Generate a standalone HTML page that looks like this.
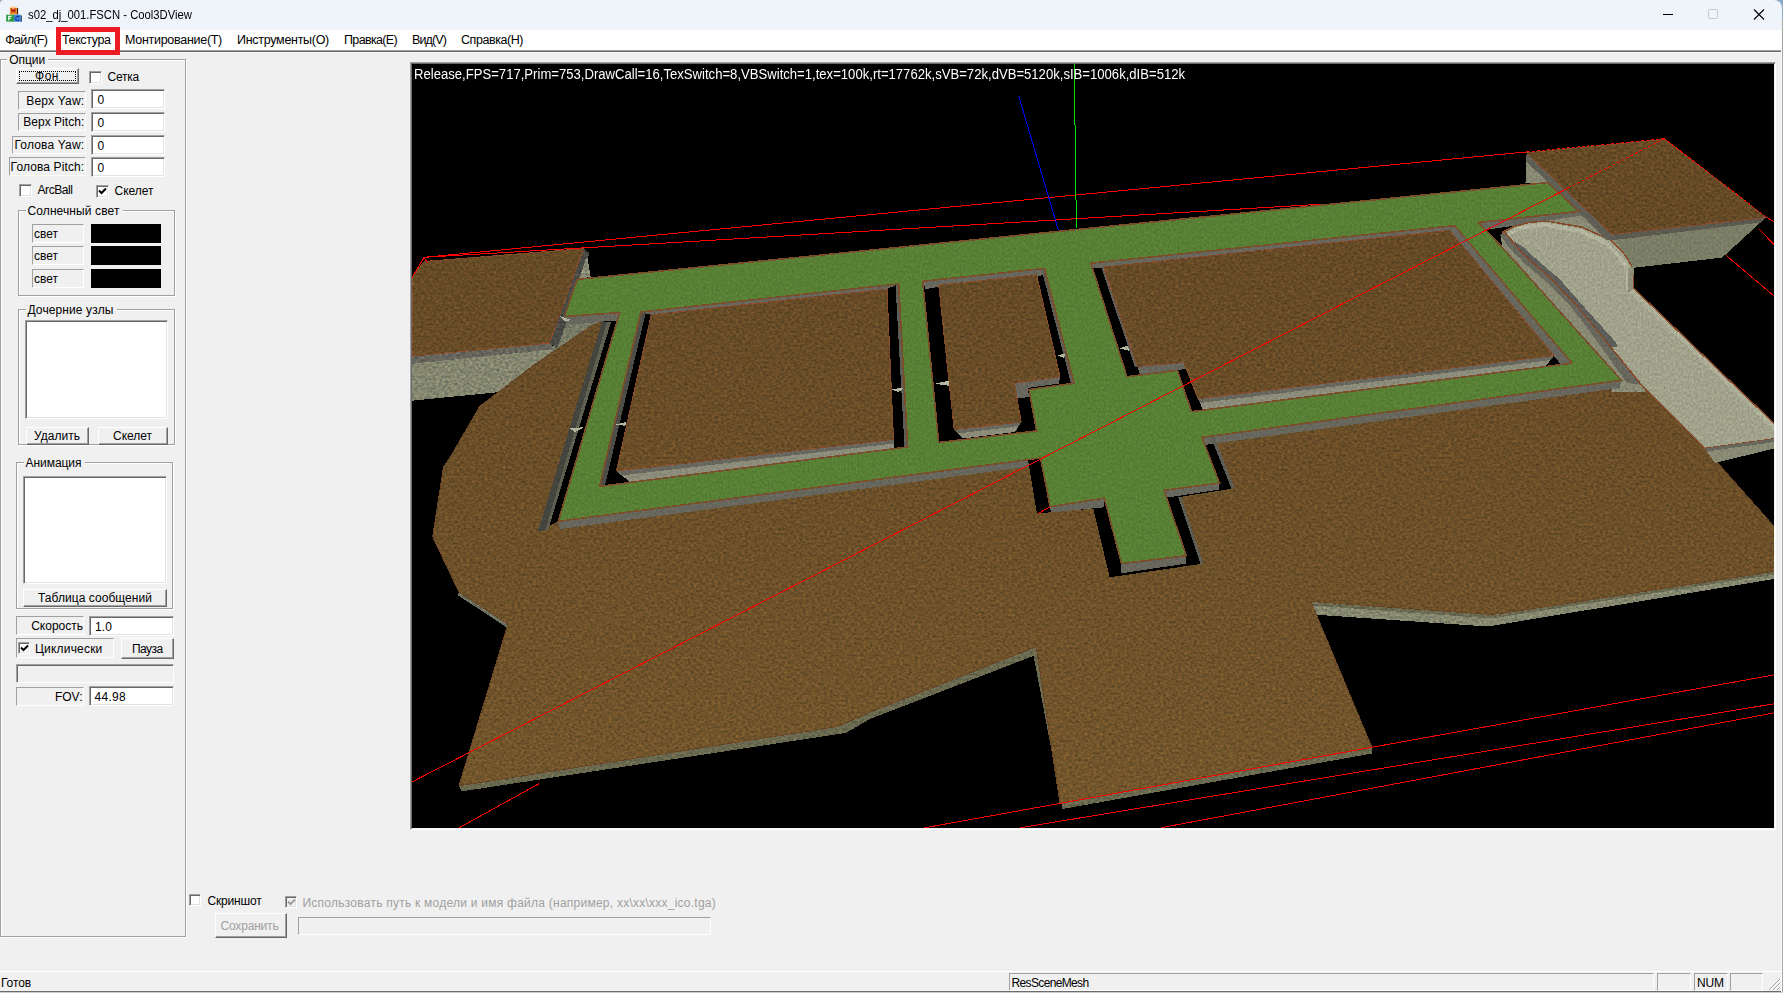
<!DOCTYPE html>
<html><head><meta charset="utf-8"><title>Cool3DView</title>
<style>

*{margin:0;padding:0;box-sizing:border-box}
html,body{width:1783px;height:993px;overflow:hidden;background:#f0f0f0}
body{position:relative;font-family:"Liberation Sans",sans-serif;font-size:11px;color:#000}
.a{position:absolute}
.t{position:absolute;white-space:nowrap;line-height:16px;height:16px}
.btn{position:absolute;background:#f0f0f0;border:1px solid;border-color:#fff #696969 #696969 #fff;box-shadow:inset -1px -1px 0 #a0a0a0, inset 1px 1px 0 #f0f0f0}
.edit{position:absolute;background:#fff;border:1px solid;border-color:#a0a0a0 #fff #fff #a0a0a0;box-shadow:inset 1px 1px 0 #696969, inset -1px -1px 0 #e3e3e3}
.sunk{position:absolute;border:1px solid;border-color:#a0a0a0 #fff #fff #a0a0a0}
.grp{position:absolute;border:1px solid #a0a0a0;box-shadow:1px 1px 0 #fff, inset 1px 1px 0 #fff}
.glab{position:absolute;background:#f0f0f0;height:12px}
.cb{position:absolute;width:13px;height:13px;background:#fff;border:1px solid;border-color:#a0a0a0 #fff #fff #a0a0a0;box-shadow:inset 1px 1px 0 #696969, inset -1px -1px 0 #e3e3e3}
.blk{position:absolute;background:#000}
.pane{position:absolute;border:1px solid;border-color:#a0a0a0 #fff #fff #a0a0a0;height:18px;top:973px}

</style></head>
<body>
<div class="a" style="left:1770px;top:0;width:13px;height:20px;background:#8aaac8"></div>
<div class="a" style="left:0;top:0;width:5px;height:5px;background:#93a7bd"></div>
<div class="a" style="left:0;top:0;width:1782px;height:30px;background:#eff3fa;border-top-right-radius:8px;border-top-left-radius:4px"></div>
<div class="a" style="left:0;top:30px;width:1783px;height:20px;background:#fff"></div>
<div class="a" style="left:0;top:50px;width:1781px;height:1px;background:#a0a0a0"></div>
<div class="a" style="left:0;top:51px;width:1781px;height:1px;background:#696969"></div>
<div class="a" style="left:0;top:52px;width:1781px;height:1px;background:#f8f8f8"></div>
<div class="a" style="left:1781px;top:30px;width:1px;height:963px;background:#fcfcfc"></div>
<div class="a" style="left:1782px;top:19px;width:1px;height:974px;background:#a8a8a8"></div>
<svg class="a" style="left:5px;top:5px" width="18" height="18" viewBox="5 5 18 18">
<rect x="16.5" y="8" width="1.6" height="6.5" fill="#3a2412"/>
<rect x="20.6" y="15.5" width="1.2" height="6.4" fill="#2a2a3a"/>
<rect x="9.9" y="7.2" width="7" height="7.4" rx="0.8" fill="#f08a22"/>
<ellipse cx="13.4" cy="7.3" rx="3.4" ry="1.1" fill="#fbd3a4"/>
<rect x="6.2" y="14.7" width="7.8" height="7.2" fill="#2f9a48"/>
<rect x="14" y="14.7" width="7" height="7.2" fill="#3b86d8"/>
<path d="M11.9 12.6V9.3l1.5 1.8 1.5-1.8v3.3" stroke="#a01818" stroke-width="1.1" fill="none"/>
<path d="M8.6 20.6v-4.3h3M8.6 18.4h2.4" stroke="#e8f6e0" stroke-width="1.2" fill="none"/>
<path d="M19.3 17.2a2 2.2 0 1 0 0 2.6" stroke="#1c3fae" stroke-width="1.2" fill="none"/>
<rect x="6.2" y="21" width="15.4" height="0.9" fill="#ffffff" opacity="0.25"/>
</svg>
<svg class="a" style="left:1650px;top:0" width="130" height="30" viewBox="0 0 130 30">
<path d="M13 14.5h10" stroke="#000" stroke-width="1"/>
<rect x="58.5" y="9.5" width="9" height="9" rx="1" fill="none" stroke="#c4c8ce" stroke-width="1"/>
<path d="M104 9.5l10 10M114 9.5l-10 10" stroke="#000" stroke-width="1.1"/>
</svg>
<div class="a" style="left:56px;top:27px;width:64px;height:28px;border:5px solid #ed1c24"></div>
<div class="grp" style="left:0px;top:59px;width:186px;height:878px"></div>
<div class="glab" style="left:7.199999999999999px;top:53px;width:41px"></div>
<div class="btn" style="left:16px;top:68px;width:63px;height:16px"></div>
<div class="a" style="left:19px;top:71px;width:57px;height:10px;border:1px dotted #000"></div>
<div class="cb" style="left:89px;top:71px"></div>
<div class="sunk" style="left:18px;top:91px;width:68px;height:19px"></div>
<div class="edit" style="left:91px;top:89px;width:74px;height:20px"></div>
<div class="sunk" style="left:18px;top:113px;width:68px;height:18px"></div>
<div class="edit" style="left:91px;top:112px;width:74px;height:20px"></div>
<div class="sunk" style="left:12px;top:136px;width:74px;height:18px"></div>
<div class="edit" style="left:91px;top:135px;width:74px;height:20px"></div>
<div class="sunk" style="left:9px;top:157px;width:77px;height:19px"></div>
<div class="edit" style="left:91px;top:157px;width:74px;height:20px"></div>
<div class="cb" style="left:19px;top:184px"></div>
<div class="cb" style="left:96px;top:185px"></div>
<svg class="a" style="left:98px;top:187px" width="9" height="9" viewBox="0 0 9 9"><path d="M1 3.5L3.5 6L8 1.5" stroke="#000" stroke-width="2" fill="none"/></svg>
<div class="grp" style="left:18px;top:210px;width:157px;height:86px"></div>
<div class="glab" style="left:25.5px;top:204px;width:97px"></div>
<div class="sunk" style="left:32px;top:224px;width:52px;height:19px"></div>
<div class="blk" style="left:91px;top:224px;width:70px;height:19px"></div>
<div class="sunk" style="left:32px;top:246px;width:52px;height:19px"></div>
<div class="blk" style="left:91px;top:246px;width:70px;height:19px"></div>
<div class="sunk" style="left:32px;top:269px;width:52px;height:19px"></div>
<div class="blk" style="left:91px;top:269px;width:70px;height:19px"></div>
<div class="grp" style="left:18px;top:309px;width:157px;height:136px"></div>
<div class="glab" style="left:25.5px;top:303px;width:91px"></div>
<div class="edit" style="left:25px;top:320px;width:143px;height:99px"></div>
<div class="btn" style="left:26px;top:427px;width:63px;height:18px"></div>
<div class="btn" style="left:98px;top:427px;width:70px;height:18px"></div>
<div class="grp" style="left:16px;top:462px;width:157px;height:147px"></div>
<div class="glab" style="left:23.5px;top:456px;width:61px"></div>
<div class="edit" style="left:23px;top:476px;width:144px;height:108px"></div>
<div class="btn" style="left:23px;top:589px;width:144px;height:18px"></div>
<div class="sunk" style="left:16px;top:616px;width:68px;height:19px"></div>
<div class="edit" style="left:89px;top:616px;width:85px;height:20px"></div>
<div class="sunk" style="left:16px;top:638px;width:98px;height:20px"></div>
<div class="cb" style="left:18px;top:642px;width:12px;height:12px"></div>
<svg class="a" style="left:19.5px;top:643.5px" width="9" height="9" viewBox="0 0 9 9"><path d="M1 3.5L3.5 6L8 1.5" stroke="#000" stroke-width="2" fill="none"/></svg>
<div class="btn" style="left:121px;top:638px;width:53px;height:21px"></div>
<div class="sunk" style="left:16px;top:664px;width:158px;height:19px;box-shadow:inset 1px 1px 0 #696969"></div>
<div class="sunk" style="left:16px;top:687px;width:68px;height:19px"></div>
<div class="edit" style="left:89px;top:686px;width:85px;height:20px"></div>
<div class="cb" style="left:189px;top:894px;width:12px;height:12px"></div>
<div class="cb" style="left:285px;top:896px;width:12px;height:12px;background:#f0f0f0"></div>
<svg class="a" style="left:286.5px;top:897.5px" width="9" height="9" viewBox="0 0 9 9"><path d="M1 3.5L3.5 6L8 1.5" stroke="#a0a0a0" stroke-width="2" fill="none"/></svg>
<div class="btn" style="left:215px;top:913px;width:72px;height:25px"></div>
<div class="sunk" style="left:298px;top:917px;width:413px;height:18px"></div>
<div class="a" style="left:0;top:971px;width:1781px;height:1px;background:#fff"></div>
<div class="a" style="left:0;top:991px;width:1781px;height:1px;background:#6b6b6b"></div>
<div class="a" style="left:0;top:992px;width:1783px;height:1px;background:#c8ccd0"></div>
<div class="pane" style="left:1009px;width:645px"></div>
<div class="pane" style="left:1657px;width:34px"></div>
<div class="pane" style="left:1694px;width:34px"></div>
<div class="pane" style="left:1730px;width:33px"></div>
<svg class="a" style="left:1768px;top:978px" width="13" height="13" viewBox="0 0 13 13">
<path d="M12 1L1 12M12 5L5 12M12 9L9 12" stroke="#a0a0a0" stroke-width="1"/>
<path d="M13 1L2 12M13 5L6 12M13 9L10 12" stroke="#fff" stroke-width="1"/></svg>
<div class="a" style="left:410px;top:62px;width:1366px;height:768px;background:#000;border:1px solid;border-color:#a0a0a0 #fff #fff #a0a0a0;box-shadow:inset 1px 1px 0 #696969, inset -1px -1px 0 #f4f4f4"></div>
<span class="t" style="top:7.0px;font-size:13px;color:#000;left:28.0px;transform-origin:0 50%;transform:scaleX(0.8673);">s02_dj_001.FSCN - Cool3DView</span>
<span class="t" style="top:31.8px;font-size:12.5px;color:#000;left:5.2px;letter-spacing:-0.643px;">Файл(F)</span>
<span class="t" style="top:31.8px;font-size:12.5px;color:#000;left:62.0px;letter-spacing:-0.378px;">Текстура</span>
<span class="t" style="top:31.8px;font-size:12.5px;color:#000;left:125.0px;letter-spacing:-0.285px;">Монтирование(T)</span>
<span class="t" style="top:31.8px;font-size:12.5px;color:#000;left:237.0px;letter-spacing:-0.286px;">Инструменты(O)</span>
<span class="t" style="top:31.8px;font-size:12.5px;color:#000;left:344.0px;letter-spacing:-0.655px;">Правка(E)</span>
<span class="t" style="top:31.8px;font-size:12.5px;color:#000;left:412.0px;letter-spacing:-0.880px;">Вид(V)</span>
<span class="t" style="top:31.8px;font-size:12.5px;color:#000;left:461.0px;letter-spacing:-0.439px;">Справка(H)</span>
<span class="t" style="top:51.5px;font-size:12px;color:#000;left:9.2px;letter-spacing:-0.025px;">Опции</span>
<span class="t" style="top:68.0px;font-size:12px;color:#000;left:35.0px;letter-spacing:0.521px;">Фон</span>
<span class="t" style="top:69.0px;font-size:12px;color:#000;left:107.5px;letter-spacing:-0.225px;">Сетка</span>
<span class="t" style="top:92.5px;font-size:12px;color:#000;left:26.3px;letter-spacing:0.184px;">Верх Yaw:</span>
<span class="t" style="top:91.5px;font-size:12px;color:#000;left:97.5px;">0</span>
<span class="t" style="top:114.0px;font-size:12px;color:#000;left:23.3px;letter-spacing:0.040px;">Верх Pitch:</span>
<span class="t" style="top:114.5px;font-size:12px;color:#000;left:97.5px;">0</span>
<span class="t" style="top:137.0px;font-size:12px;color:#000;left:14.5px;letter-spacing:0.168px;">Голова Yaw:</span>
<span class="t" style="top:137.5px;font-size:12px;color:#000;left:97.5px;">0</span>
<span class="t" style="top:158.5px;font-size:12px;color:#000;left:10.6px;letter-spacing:0.116px;">Голова Pitch:</span>
<span class="t" style="top:159.5px;font-size:12px;color:#000;left:97.5px;">0</span>
<span class="t" style="top:182.0px;font-size:12px;color:#000;left:37.5px;letter-spacing:-0.431px;">ArcBall</span>
<span class="t" style="top:183.0px;font-size:12px;color:#000;left:114.5px;letter-spacing:-0.018px;">Скелет</span>
<span class="t" style="top:202.5px;font-size:12px;color:#000;left:27.5px;letter-spacing:0.104px;">Солнечный свет</span>
<span class="t" style="top:225.5px;font-size:12px;color:#000;left:34.0px;letter-spacing:-0.004px;">свет</span>
<span class="t" style="top:247.5px;font-size:12px;color:#000;left:34.0px;letter-spacing:-0.004px;">свет</span>
<span class="t" style="top:270.5px;font-size:12px;color:#000;left:34.0px;letter-spacing:-0.004px;">свет</span>
<span class="t" style="top:301.5px;font-size:12px;color:#000;left:27.5px;letter-spacing:0.107px;">Дочерние узлы</span>
<span class="t" style="top:428.0px;font-size:12px;color:#000;left:34.0px;letter-spacing:0.025px;">Удалить</span>
<span class="t" style="top:428.0px;font-size:12px;color:#000;left:113.0px;letter-spacing:-0.018px;">Скелет</span>
<span class="t" style="top:454.5px;font-size:12px;color:#000;left:25.5px;letter-spacing:-0.043px;">Анимация</span>
<span class="t" style="top:590.0px;font-size:12px;color:#000;left:38.0px;letter-spacing:0.048px;">Таблица сообщений</span>
<span class="t" style="top:618.0px;font-size:12px;color:#000;right:1700.0px;">Скорость</span>
<span class="t" style="top:618.5px;font-size:12px;color:#000;left:95.0px;letter-spacing:0.104px;">1.0</span>
<span class="t" style="top:640.5px;font-size:12px;color:#000;left:35.0px;letter-spacing:0.194px;">Циклически</span>
<span class="t" style="top:640.5px;font-size:12px;color:#000;left:132.0px;letter-spacing:-0.569px;">Пауза</span>
<span class="t" style="top:688.5px;font-size:12px;color:#000;right:1700.5px;">FOV:</span>
<span class="t" style="top:688.5px;font-size:12px;color:#000;left:94.5px;letter-spacing:0.294px;">44.98</span>
<span class="t" style="top:892.5px;font-size:12px;color:#000;left:207.5px;letter-spacing:-0.182px;">Скриншот</span>
<span class="t" style="top:894.5px;font-size:12px;color:#a0a0a0;left:302.5px;letter-spacing:0.244px;">Использовать путь к модели и имя файла (например, xx\xx\xxx_ico.tga)</span>
<span class="t" style="top:917.5px;font-size:12px;color:#a0a0a0;left:220.5px;letter-spacing:-0.182px;">Сохранить</span>
<span class="t" style="top:974.5px;font-size:12px;color:#000;left:1.0px;letter-spacing:-0.103px;">Готов</span>
<span class="t" style="top:974.5px;font-size:12px;color:#000;left:1011.5px;letter-spacing:-0.643px;">ResSceneMesh</span>
<span class="t" style="top:974.5px;font-size:12px;color:#000;left:1697.0px;letter-spacing:-0.109px;">NUM</span>
<svg id="vp" width="1783" height="993" viewBox="0 0 1783 993" style="position:absolute;left:0;top:0" shape-rendering="crispEdges">
<defs>
<linearGradient id="gb" gradientUnits="userSpaceOnUse" x1="0" y1="240" x2="0" y2="800"><stop offset="0" stop-color="#654a26"/><stop offset="1" stop-color="#73562c"/></linearGradient>
<clipPath id="vpc"><rect x="412" y="64" width="1362" height="764"/></clipPath>
<filter id="nzB" x="411" y="63" width="1364" height="766" filterUnits="userSpaceOnUse" color-interpolation-filters="sRGB">
<feTurbulence type="fractalNoise" baseFrequency="0.33 0.42" numOctaves="3" seed="7" result="n"/>
<feColorMatrix in="n" type="matrix" values="0.75 0 0 0 0.125  0.62 0.1 0 0 0.14  0.55 0 0.15 0 0.15  0 0 0 0 1" result="g"/>
<feComposite in="SourceGraphic" in2="g" operator="arithmetic" k1="1.0" k2="0.5" k3="0" k4="0"/>
</filter>
<filter id="nzG" x="411" y="63" width="1364" height="766" filterUnits="userSpaceOnUse" color-interpolation-filters="sRGB">
<feTurbulence type="fractalNoise" baseFrequency="0.5 0.38" numOctaves="2" seed="11" result="n"/>
<feColorMatrix in="n" type="matrix" values="0.32 0 0 0 0.34  0.32 0 0 0 0.34  0.32 0 0 0 0.34  0 0 0 0 1" result="g"/>
<feComposite in="SourceGraphic" in2="g" operator="arithmetic" k1="1.0" k2="0.5" k3="0" k4="0"/>
</filter>
</defs>
<g clip-path="url(#vpc)">
<g filter="url(#nzB)">
<polygon points="459.0,785.8 838.3,726.4 870.0,712.2 1035.4,647.0 1036.7,654.7 870.0,719.0 846.0,732.9 461.6,791.4" fill="#69694f" />
<polygon points="1035.4,641.3 1060.0,803.2 1372.0,747.5 1372.0,753.5 1062.5,809.0 1032.5,650.0" fill="#69694f" />
<polygon points="1310.8,601.5 1491.5,614.5 1774.5,571.3 1774.5,579.0 1488.0,626.5 1316.7,614.8" fill="#85876f" />
<polygon points="1310.8,601.5 1491.5,614.5 1774.5,571.3 1774.5,574.5 1491.0,618.5 1312.0,605.5" fill="#69694f" />
<polygon points="459.0,592.2 508.0,624.0 507.0,627.5 457.5,595.0" fill="#6d7060" />
<polygon points="412.0,363.1 551.4,347.6 566.0,338.0 545.0,370.0 505.0,391.5 412.0,400.7" fill="#84866f" />
<polygon points="412.0,356.1 549.3,343.2 556.0,349.0 412.0,363.8" fill="#66655c" />
<polygon points="566.0,318.0 610.0,318.0 600.0,330.0 550.0,352.0" fill="#777a66" />
<polygon points="583.5,248.6 589.5,253.0 580.5,279.4 567.0,316.6 568.5,318.0 557.0,348.0 549.3,343.2" fill="#4a4a45" />
<polygon points="587.1,255.9 590.7,276.7 578.9,279.0" fill="#888a74" />
<polygon points="602.2,321.3 590.6,326.4 533.8,365.1 479.7,406.4 451.3,455.4 443.5,467.1 432.7,536.7 459.0,592.2 508.0,624.0 459.0,785.8 838.3,726.4 870.0,712.2 1035.4,647.0 1035.4,641.3 1060.0,803.2 1372.0,747.5 1310.8,601.5 1491.5,614.5 1501.0,613.5 1774.5,571.3 1774.5,527.0 1704.8,448.4 1641.2,384.6 1618.7,388.5 1201.9,443.0 1040.6,458.0 558.3,521.3 565.0,500.0" fill="url(#gb)" stroke="#6a4526" stroke-width="1"/>
<polygon points="1612.0,376.0 1645.0,382.0 1645.0,392.0 1612.0,392.0" fill="#888a74" />
</g><g filter="url(#nzG)">
<polygon points="577.1,279.4 1547.5,182.6 1579.3,211.3 1478.5,222.5 1502.7,247.9 1621.5,380.3 1201.9,437.4 1219.6,483.1 1164.0,490.3 1186.3,555.7 1121.5,563.6 1104.4,498.1 1050.1,506.7 1040.6,458.0 558.3,521.3 619.7,312.5 564.4,316.6" fill="#588035" stroke="#86492a" stroke-width="1" stroke-linejoin="round"/>
<polygon points="564.4,316.6 619.7,312.5 617.0,321.0 566.0,324.5" fill="#68675d" />
<polygon points="602.2,321.3 616.5,321.0 558.3,521.3 538.0,531.0" fill="#000" />
<polygon points="602.2,321.3 607.0,322.0 545.0,531.0 538.0,531.0" fill="#45453f" />
<polygon points="607.0,322.0 611.0,322.0 549.0,527.0 545.0,531.0" fill="#5f5f50" />
<polygon points="558.3,521.3 1040.6,458.0 1041.5,465.0 560.0,529.0" fill="#68675d" />
<polygon points="641.0,312.0 898.7,283.9 907.7,447.0 599.6,486.4" fill="#000" />
<polygon points="641.0,312.0 898.7,283.9 887.0,289.0 651.2,314.8" fill="#68675d" />
<polygon points="641.0,312.0 646.0,311.5 605.0,485.5 599.6,486.4" fill="#4e4e48" />
<polygon points="898.7,283.9 907.7,447.0 904.5,447.4 895.5,284.5" fill="#5d5c55" />
<polygon points="616.4,471.0 893.5,439.5 894.0,449.0 630.6,482.6" fill="#8b8c7a" />
<polygon points="616.4,471.0 893.5,439.5 893.7,443.5 621.0,475.5" fill="#68675d" />
<polygon points="922.7,281.3 1044.5,268.4 1074.1,383.2 1029.0,389.6 1036.7,430.9 938.7,442.5" fill="#000" />
<polygon points="922.7,281.3 1044.5,268.4 1045.5,275.0 938.7,287.0 925.5,289.0" fill="#68675d" />
<polygon points="1014.3,383.2 1060.0,376.7 1059.0,383.5 1028.0,388.0 1029.0,397.0 1016.0,398.5" fill="#68675d" />
<polygon points="954.2,429.6 1021.2,421.9 1015.0,432.0 963.0,438.5" fill="#8b8c7a" />
<polygon points="954.2,429.6 1021.2,421.9 1019.0,426.0 958.0,433.5" fill="#68675d" />
<polygon points="1044.5,268.4 1074.1,383.2 1071.0,383.6 1041.5,269.0" fill="#5d5c55" />
<polygon points="1090.9,263.2 1454.6,225.6 1572.0,363.2 1191.5,411.6 1177.3,370.3 1127.0,376.7" fill="#000" />
<polygon points="1090.9,263.2 1454.6,225.6 1449.4,230.3 1103.8,267.1 1093.0,268.5" fill="#68675d" />
<polygon points="1454.6,225.6 1572.0,363.2 1561.0,364.6 1449.4,230.3" fill="#68675d" />
<polygon points="1198.0,398.7 1553.9,355.5 1546.0,366.0 1203.0,410.0" fill="#8b8c7a" />
<polygon points="1198.0,398.7 1553.9,355.5 1551.0,360.0 1200.0,403.0" fill="#68675d" />
<polygon points="1137.4,366.4 1183.8,362.5 1186.0,369.0 1176.0,370.3 1140.0,375.0" fill="#68675d" />
<polygon points="1119.3,348.3 1129.6,345.0 1129.6,350.9" fill="#b4b8a0" />
<polygon points="1056.1,354.8 1065.1,354.3 1063.8,357.9" fill="#b4b8a0" />
<polygon points="934.8,383.7 949.0,380.6 949.0,385.8" fill="#b4b8a0" />
<polygon points="891.0,389.1 903.9,387.8 898.7,392.2" fill="#b4b8a0" />
<polygon points="570.0,428.4 584.1,427.1 575.1,432.2" fill="#b4b8a0" />
<polygon points="616.4,424.5 626.7,421.9 625.4,425.8" fill="#b4b8a0" />
<polygon points="559.6,316.1 571.2,320.0 564.8,321.3" fill="#b4b8a0" />
<polygon points="1101.3,267.5 1103.8,267.1 1137.4,366.4 1134.8,366.8" fill="#5d5c55" />
<polygon points="1040.6,458.0 1050.1,506.7 1104.4,498.1 1121.5,563.6 1186.3,555.7 1164.0,490.3 1219.6,483.1 1201.9,437.4 1214.0,436.0 1234.7,488.3 1181.0,496.8 1203.3,563.6 1109.7,577.3 1093.3,508.6 1037.0,513.5 1028.0,460.0" fill="#000" />
<polygon points="1050.1,506.7 1104.4,498.1 1103.8,507.3 1050.8,512.5" fill="#68675d" />
<polygon points="1121.5,563.6 1186.3,555.7 1186.3,563.6 1120.8,573.4" fill="#68675d" />
<polygon points="1164.0,490.3 1219.6,483.1 1219.0,489.6 1167.9,497.5" fill="#68675d" />
<polygon points="1201.9,437.4 1621.5,380.3 1619.5,388.0 1204.0,445.0" fill="#68675d" />
<polygon points="1214.0,436.0 1234.7,488.3 1231.5,488.8 1210.5,436.5" fill="#5d5c55" />
<polygon points="1181.0,496.8 1203.3,563.6 1200.5,564.0 1178.3,497.2" fill="#5d5c55" />
<polygon points="1478.5,222.5 1579.3,211.3 1582.5,215.5 1549.0,220.5 1537.7,221.2 1512.9,226.0 1486.4,229.8" fill="#68675d" />
<polygon points="1549.0,220.5 1582.5,215.5 1613.0,237.2 1634.5,267.7 1634.0,290.0 1609.7,239.5 1581.5,227.1" fill="#888a74" />
<polygon points="1500.5,236.6 1502.7,247.9 1621.5,380.3 1621.5,388.0 1633.3,386.2 1627.0,383.0 1598.0,342.5 1570.5,306.3 1543.0,279.0 1522.0,260.8 1508.9,247.9 1500.5,235.5" fill="#888a74" />
<polygon points="1500.5,235.5 1508.9,247.9 1522.0,260.8 1543.0,279.0 1570.5,306.3 1598.0,342.5 1627.0,383.0 1641.2,384.6 1607.0,342.5 1577.5,306.3 1551.5,279.0 1530.5,260.8 1517.9,247.9 1503.8,231.5" fill="#68675d" />
<polygon points="1502.6,232.2 1512.9,227.0 1526.4,223.0 1537.7,221.6 1549.0,221.4 1581.5,227.1 1609.7,239.5 1624.4,254.1 1632.3,266.6 1633.4,288.0 1690.0,342.5 1774.5,423.8 1774.5,438.8 1704.8,448.4 1641.2,384.6 1607.0,342.5 1577.5,306.3 1551.5,279.0 1530.5,260.8 1517.9,247.9 1503.8,231.5" fill="#a1a28b" stroke="#86492a" stroke-width="1.5" stroke-linejoin="round"/>
<polyline points="1509.0,233.5 1519.0,228.5 1538.0,225.5 1549.0,225.3 1580.0,231.0 1606.0,243.0 1620.0,257.0 1627.5,268.5 1628.5,290.0" fill="none" stroke="#b3b49d" stroke-width="4"/>
<polyline points="1631.0,290.0 1690.0,346.0 1774.5,428.0" fill="none" stroke="#adae97" stroke-width="5"/>
<polygon points="1628.4,268.0 1633.4,266.6 1633.4,288.0 1628.4,292.7" fill="#8c8e79" />
<polygon points="1517.9,247.9 1530.5,260.8 1551.5,279.0 1577.5,306.3 1607.0,342.5 1611.0,346.8 1617.5,346.8 1616.0,342.5 1583.5,306.3 1559.5,279.0 1538.0,260.8 1524.1,247.9 1514.0,241.1" fill="#5c5d58" />
<polyline points="1503.8,231.5 1517.9,247.9 1530.5,260.8 1551.5,279.0 1577.5,306.3 1607.0,342.5 1641.2,384.6" fill="none" stroke="#86492a" stroke-width="1.2"/>
<polyline points="1633.4,288.0 1690.0,342.5 1774.5,423.8" fill="none" stroke="#86492a" stroke-width="1.5"/>
<polygon points="1704.8,448.4 1774.5,438.8 1774.5,448.4 1715.0,463.0" fill="#888a74" />
<polygon points="1704.8,448.4 1774.5,438.8 1774.5,442.0 1707.0,451.5" fill="#68675d" />
<polygon points="1577.0,210.5 1592.0,221.0 1582.0,218.0" fill="#888a74" />
<polygon points="1526.8,152.9 1525.5,182.6 1547.5,182.6 1579.3,211.3 1584.0,216.0 1612.0,238.0" fill="#888a74" />
<polygon points="1612.0,236.0 1766.2,217.4 1722.2,257.6 1634.5,267.7" fill="#7b7e66" />
<polygon points="1612.0,234.2 1766.2,217.4 1761.0,222.5 1614.0,240.0" fill="#5c5a4e" />
<polygon points="1526.8,152.9 1613.0,234.2 1614.0,240.0 1606.0,239.5 1525.8,161.0" fill="#605f55" />
</g><g filter="url(#nzB)">
<polygon points="412.0,277.4 424.2,261.5 583.5,248.6 549.3,343.2 412.0,356.1" fill="url(#gb)" stroke="#86492a" stroke-width="1" stroke-linejoin="round"/>
<polygon points="651.2,314.8 887.0,289.0 893.5,439.5 616.4,471.0" fill="url(#gb)" stroke="#86492a" stroke-width="1" stroke-linejoin="round"/>
<polygon points="938.7,285.1 1036.7,274.8 1060.0,376.7 1014.3,383.2 1021.2,421.9 954.2,429.6" fill="url(#gb)" stroke="#86492a" stroke-width="1" stroke-linejoin="round"/>
<polygon points="1103.8,267.1 1449.4,230.3 1553.9,355.5 1198.0,398.7 1183.8,362.5 1137.4,366.4" fill="url(#gb)" stroke="#86492a" stroke-width="1" stroke-linejoin="round"/>
<polygon points="1526.8,152.9 1664.9,139.2 1766.2,217.4 1612.0,234.2" fill="url(#gb)" stroke="#86492a" stroke-width="1" stroke-linejoin="round"/>
</g>
<polygon points="577.1,279.4 1547.5,182.6 1579.3,211.3 1478.5,222.5 1502.7,247.9 1621.5,380.3 1201.9,437.4 1219.6,483.1 1164.0,490.3 1186.3,555.7 1121.5,563.6 1104.4,498.1 1050.1,506.7 1040.6,458.0 558.3,521.3 619.7,312.5 564.4,316.6" fill="none" stroke="#7c4d2b" stroke-width="1.6"/><polygon points="641.0,312.0 898.7,283.9 907.7,447.0 599.6,486.4" fill="none" stroke="#7c4d2b" stroke-width="1.6"/><polygon points="922.7,281.3 1044.5,268.4 1074.1,383.2 1029.0,389.6 1036.7,430.9 938.7,442.5" fill="none" stroke="#7c4d2b" stroke-width="1.6"/><polygon points="1090.9,263.2 1454.6,225.6 1572.0,363.2 1191.5,411.6 1177.3,370.3 1127.0,376.7" fill="none" stroke="#7c4d2b" stroke-width="1.6"/>
<polyline points="537.0,531.0 508.5,622.0" fill="none" stroke="#6a4024" stroke-width="1" stroke-dasharray="2 1" opacity="0.7"/>
<g shape-rendering="crispEdges">
<polyline points="424.2,257.3 1526.8,151.9" fill="none" stroke="#ff0000" stroke-width="1"/>
<polyline points="424.2,257.3 1320.0,204.3" fill="none" stroke="#ff0000" stroke-width="1"/>
<polyline points="424.2,257.3 412.0,277.4" fill="none" stroke="#ff0000" stroke-width="1"/>
<polyline points="420.5,263.3 424.2,258.0 428.0,263.0" fill="none" stroke="#ff0000" stroke-width="1"/>
<polyline points="1571.0,186.6 412.0,781.9" fill="none" stroke="#ff0000" stroke-width="1"/>
<polyline points="459.0,827.8 539.0,783.7" fill="none" stroke="#ff0000" stroke-width="1"/>
<polyline points="924.5,827.8 1774.0,674.9" fill="none" stroke="#ff0000" stroke-width="1"/>
<polyline points="1020.0,827.8 1774.0,703.8" fill="none" stroke="#ff0000" stroke-width="1"/>
<polyline points="1160.6,827.8 1774.0,712.9" fill="none" stroke="#ff0000" stroke-width="1"/>
<polyline points="1766.7,217.3 1774.0,221.6" fill="none" stroke="#ff0000" stroke-width="1"/>
<polyline points="1759.0,229.0 1774.0,244.5" fill="none" stroke="#ff0000" stroke-width="1"/>
<polyline points="1725.5,254.8 1774.0,296.0" fill="none" stroke="#ff0000" stroke-width="1"/>
<polyline points="1038.0,513.5 1049.6,507.0" fill="none" stroke="#ff0000" stroke-width="1"/>
<polyline points="1526.8,151.9 1664.3,138.7" fill="none" stroke="#ff0000" stroke-width="1" stroke-dasharray="3 2"/>
<polyline points="1664.3,138.7 1571.0,186.6" fill="none" stroke="#ff0000" stroke-width="1" stroke-dasharray="3 2"/>
<polyline points="1664.3,138.7 1766.7,217.3" fill="none" stroke="#ff0000" stroke-width="1" stroke-dasharray="3 2"/>
<line x1="1074.2" y1="64.0" x2="1076.4" y2="228.5" stroke="#00e000" stroke-width="1" />
<line x1="1018.6" y1="95.5" x2="1058.3" y2="230.0" stroke="#0000ff" stroke-width="1" />
</g>
</g>
</svg>
<span class="t" style="left:414px;font-size:14px;color:#fff;top:66.1px;transform-origin:0 50%;transform:scaleX(0.936)" id="hud">Release,FPS=717,Prim=753,DrawCall=16,TexSwitch=8,VBSwitch=1,tex=100k,rt=17762k,sVB=72k,dVB=5120k,sIB=1006k,dIB=512k</span>
</body></html>
